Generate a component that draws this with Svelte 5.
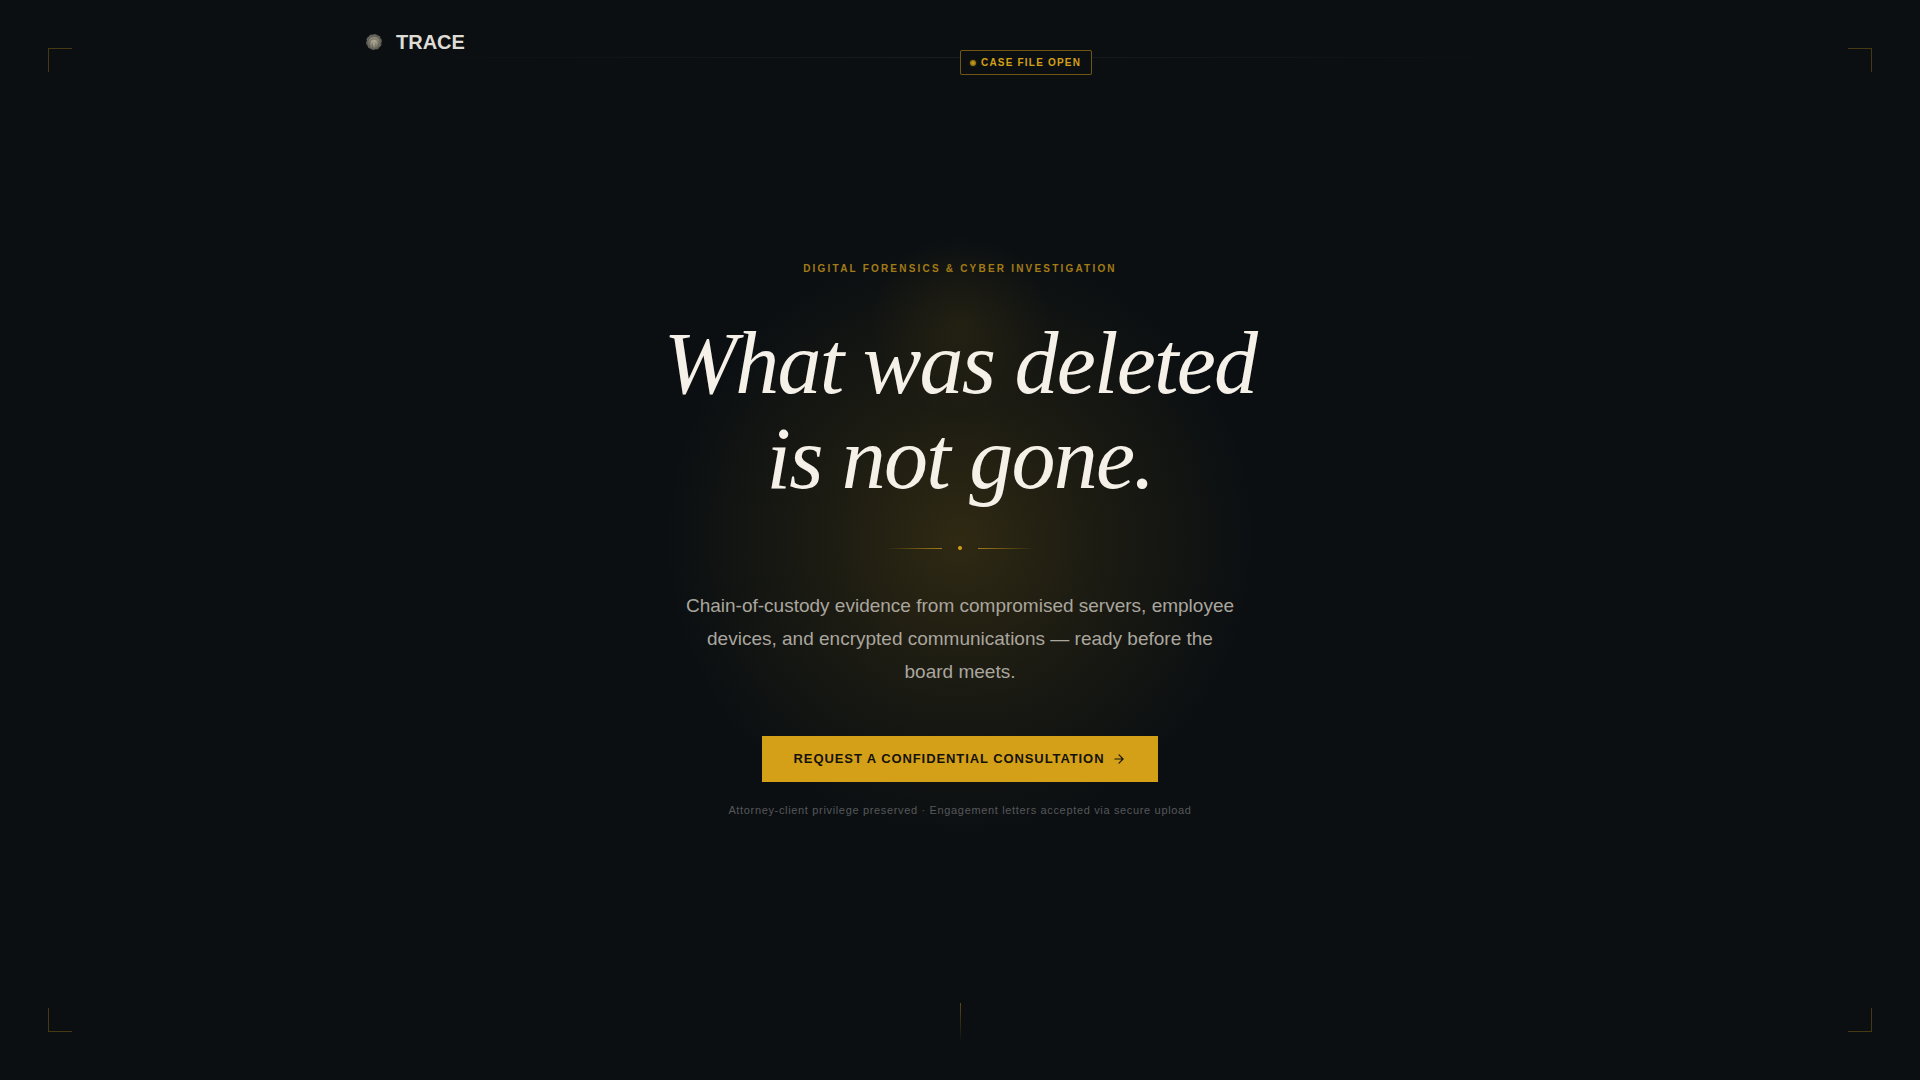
<script>
  const headline = ["What was deleted", "is not gone."];
  const corners = ["top-left", "top-right", "bottom-left", "bottom-right"];
</script>

<div class="page">
  {#each corners as corner}
    <span class="corner {corner}" aria-hidden="true"></span>
  {/each}

  <header class="site-header">
    <a class="brand" href="/">
      <svg class="brand-mark" viewBox="0 0 28 28" aria-hidden="true">
        <defs>
          <radialGradient id="mark">
            <stop offset="0" stop-color="#bdb7a3" />
            <stop offset="0.5" stop-color="#8d8878" />
            <stop offset="1" stop-color="#5a5a54" />
          </radialGradient>
        </defs>
        <circle cx="14" cy="14" r="8" fill="url(#mark)" />
        <g fill="none" stroke="#1b1d1c" stroke-width="0.5" opacity="0.5">
          <path d="M8 18c-1-5 1-10 6-10s7 4 6 9" />
          <path d="M10 20c-1-5 0-9 4-9s5 4 4 9" />
          <path d="M13 21c-1-4-1-7 1-7s2 3 2 7" />
        </g>
        <circle
          cx="14"
          cy="14"
          r="8"
          fill="none"
          stroke="#0b0f12"
          stroke-width="1"
          stroke-dasharray="2 3"
        />
      </svg>
      <span>TRACE</span>
    </a>
  </header>

  <div class="case-line" aria-hidden="true"></div>
  <div class="case-badge">
    <span class="case-dot"></span>
    CASE FILE OPEN
  </div>

  <main class="hero">
    <p class="eyebrow">Digital Forensics &amp; Cyber Investigation</p>
    <h1>
      {#each headline as line}
        <span>{line}</span>
      {/each}
    </h1>
    <div class="divider" aria-hidden="true">
      <span class="rule"></span>
      <span class="dot"></span>
      <span class="rule rule-right"></span>
    </div>
    <p class="lead">
      Chain-of-custody evidence from compromised servers, employee devices, and
      encrypted communications — ready before the board meets.
    </p>
    <a class="cta" href="#consultation">
      Request a confidential consultation
      <svg viewBox="0 0 24 24" aria-hidden="true">
        <path d="M5 12h14M12 5l7 7-7 7" />
      </svg>
    </a>
    <p class="fine-print">
      Attorney-client privilege preserved · Engagement letters accepted via
      secure upload
    </p>
  </main>

  <footer class="page-foot" aria-hidden="true">
    <span class="scroll-line"></span>
  </footer>
</div>

<style>
  :global(body) {
    margin: 0;
    background: #0b0f12;
  }
  .page {
    position: relative;
    display: grid;
    grid-template-rows: 84px 1fr 85px;
    min-height: 100vh;
    box-sizing: border-box;
    overflow: hidden;
    font-family: "Liberation Sans", Arial, sans-serif;
    color: #f5f0e8;
    background:
      radial-gradient(
        circle 90px at 50% 30%,
        rgba(212, 160, 23, 0.08),
        transparent
      ),
      radial-gradient(
        circle 296px at 50% 50%,
        rgba(212, 160, 23, 0.18),
        rgba(212, 160, 23, 0.08) 50%,
        transparent
      ),
      #0b0f12;
  }

  .corner {
    position: absolute;
    width: 24px;
    height: 24px;
    box-sizing: border-box;
    border: 0 solid rgba(212, 160, 23, 0.3);
  }
  .top-left {
    top: 48px;
    left: 48px;
    border-width: 1px 0 0 1px;
  }
  .top-right {
    top: 48px;
    right: 48px;
    border-width: 1px 1px 0 0;
  }
  .bottom-left {
    bottom: 48px;
    left: 48px;
    border-width: 0 0 1px 1px;
  }
  .bottom-right {
    bottom: 48px;
    right: 48px;
    border-width: 0 1px 1px 0;
  }

  .site-header {
    display: flex;
    align-items: center;
    width: 100%;
    max-width: 1200px;
    margin: 0 auto;
  }
  .brand {
    display: flex;
    align-items: center;
    gap: 8px;
    color: #dfdcd5;
    font-size: 20px;
    line-height: 28px;
    font-weight: 700;
    text-decoration: none;
  }
  .brand-mark {
    width: 28px;
    height: 28px;
  }

  .case-line {
    position: absolute;
    top: 57px;
    left: 20%;
    right: 20%;
    height: 1px;
    background: linear-gradient(
      90deg,
      transparent,
      rgba(245, 240, 232, 0.06),
      transparent
    );
  }
  .case-badge {
    position: absolute;
    top: 50px;
    left: 50%;
    display: flex;
    align-items: center;
    gap: 5px;
    padding: 6px 10px 5px 9px;
    border: 1px solid rgba(212, 160, 23, 0.5);
    border-radius: 2px;
    background: #0c0f11;
    color: #d4a017;
    font-size: 10px;
    line-height: 12px;
    font-weight: 700;
    letter-spacing: 0.12em;
  }
  .case-dot {
    width: 6px;
    height: 6px;
    border-radius: 50%;
    background: radial-gradient(#d4a017, rgba(212, 160, 23, 0.5));
    box-shadow: 0 0 2px rgba(212, 160, 23, 0.4);
  }

  .hero {
    display: flex;
    flex-direction: column;
    align-items: center;
    justify-content: center;
    padding: 0 24px;
    text-align: center;
  }
  .eyebrow {
    margin: 0 0 40px;
    color: #a47c16;
    font-size: 10px;
    line-height: 15px;
    font-weight: 700;
    letter-spacing: 0.22em;
    text-transform: uppercase;
  }
  h1 {
    margin: 0 0 40px;
    font-family: "Liberation Serif", "Times New Roman", serif;
    font-size: 88px;
    line-height: 95px;
    font-weight: 400;
    font-style: italic;
    letter-spacing: -0.02em;
  }
  h1 span {
    display: block;
  }
  .divider {
    display: flex;
    align-items: center;
    gap: 16px;
    margin-bottom: 39px;
  }
  .rule {
    width: 56px;
    height: 1px;
    background: linear-gradient(90deg, transparent, #a17a16);
  }
  .rule-right {
    background: linear-gradient(270deg, transparent, #a17a16);
  }
  .dot {
    width: 4px;
    height: 4px;
    border-radius: 50%;
    background: #d4a017;
  }
  .lead {
    max-width: 556px;
    margin: 0 0 48px;
    color: #aaa69e;
    font-size: 19px;
    line-height: 33px;
  }
  .cta {
    display: flex;
    align-items: center;
    gap: 8px;
    padding: 15px 32px;
    background: #d4a017;
    color: #14120c;
    font-size: 13px;
    line-height: 16px;
    font-weight: 700;
    letter-spacing: 0.07em;
    text-decoration: none;
    text-transform: uppercase;
  }
  .cta svg {
    width: 14px;
    height: 14px;
    fill: none;
    stroke: currentColor;
    stroke-width: 2;
    stroke-linecap: round;
    stroke-linejoin: round;
  }
  .fine-print {
    margin: 20px 0 0;
    color: #56585a;
    font-size: 11px;
    line-height: 16px;
    letter-spacing: 0.06em;
  }

  .page-foot {
    display: flex;
    justify-content: center;
    padding-top: 8px;
  }
  .scroll-line {
    width: 1px;
    height: 40px;
    background: linear-gradient(rgba(212, 160, 23, 0.4), transparent);
  }
</style>
